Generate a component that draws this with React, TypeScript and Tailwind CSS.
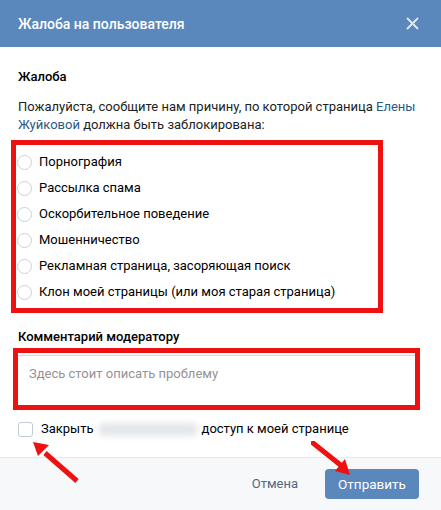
import React from 'react';

const reasons = [
  'Порнография',
  'Рассылка спама',
  'Оскорбительное поведение',
  'Мошенничество',
  'Рекламная страница, засоряющая поиск',
  'Клон моей страницы (или моя старая страница)',
];

const Radio: React.FC<{ label: string }> = ({ label }) => (
  <div className="flex items-center h-[26px]">
    <span className="w-[15px] h-[15px] rounded-full border border-[#c9d2dc] bg-white shrink-0" />
    <span className="ml-[7px] text-[13px] text-black">{label}</span>
  </div>
);

const Arrow: React.FC<{ className: string; flip?: boolean }> = ({ className, flip }) => (
  <svg className={className} width="60" height="50" viewBox="0 0 60 50">
    {flip ? (
      <>
        <line x1="2" y1="2" x2="32" y2="26" stroke="#ee1111" strokeWidth="5" strokeLinecap="round" />
        <polygon points="39,34 24,30 34,18" fill="#ee1111" />
      </>
    ) : (
      <>
        <line x1="46" y1="40" x2="14" y2="12" stroke="#ee1111" strokeWidth="5" />
        <polygon points="2,1 18,4 7,15" fill="#ee1111" />
      </>
    )}
  </svg>
);

export default function App() {
  return (
    <div className="relative w-[441px] h-[510px] bg-white overflow-hidden font-['Roboto','Liberation_Sans',sans-serif] text-[13px] text-black">
      <div className="h-[47px] bg-[#5a87bc] flex items-center justify-between pl-[18px] pr-[22px]">
        <span className="text-white text-[14px] font-medium pt-[1px]">Жалоба на пользователя</span>
        <svg width="13" height="13" viewBox="0 0 13 13">
          <path d="M1 1L12 12M12 1L1 12" stroke="#dce6f1" strokeWidth="2" />
        </svg>
      </div>

      <div className="px-[18px] pt-[21px]">
        <div className="font-medium leading-[18px]">Жалоба</div>
        <p className="mt-[12px] leading-[18px] text-[#222]">
          Пожалуйста, сообщите нам причину, по которой страница <span className="text-[#2a5885]">Елены Жуйковой</span> должна быть заблокирована:
        </p>

        <div className="mt-[6px] ml-[-7px] w-[372px] border-[5px] border-[#ee1111] pl-[1px] pt-[4px] pb-[3px]">
          {reasons.map((r) => (
            <Radio key={r} label={r} />
          ))}
        </div>

        <div className="mt-[15px] font-medium leading-[18px]">Комментарий модератору</div>

        <div className="mt-[2px] ml-[-5px] w-[407px] h-[62px] border-[5px] border-[#ee1111] pt-[2px]">
          <div className="h-full border-t border-[#d3d9de] pl-[11px] pt-[8px] text-[#939393]">
            Здесь стоит описать проблему
          </div>
        </div>

        <div className="mt-[11px] flex items-center h-[16px]">
          <span className="w-[15px] h-[15px] rounded-[3px] border border-[#c1cbd6] bg-white shrink-0" />
          <span className="ml-[8px]">Закрыть</span>
          <span className="mx-[5px] w-[98px] h-[13px] bg-[#e3e6ea] blur-[3px] rounded-sm" />
          <span>доступ к моей странице</span>
        </div>
      </div>

      <div className="absolute left-0 right-0 bottom-0 h-[53px] border-t border-[#e7e8ec] bg-[#f7f8fa] flex items-center justify-end pr-[22px]">
        <span className="text-[#55677d] mr-[27px]">Отмена</span>
        <button className="w-[94px] h-[30px] rounded-[4px] bg-[#5a87bc] text-white text-[13.5px]">Отправить</button>
      </div>

      <Arrow className="absolute left-[31px] top-[441px]" />
      <Arrow className="absolute left-[311px] top-[441px]" flip />
    </div>
  );
}
